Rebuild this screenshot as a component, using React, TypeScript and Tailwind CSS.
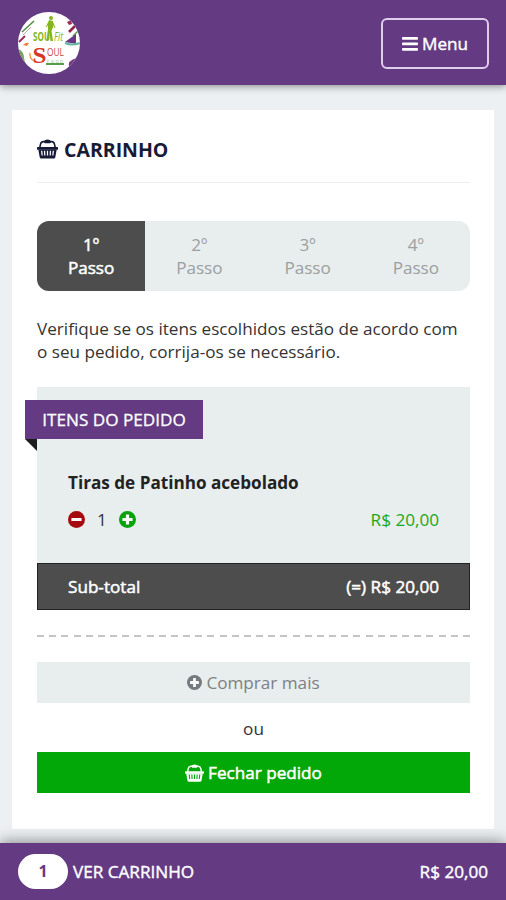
import type { ReactNode } from "react";

const steps = ["1º", "2º", "3º", "4º"];

function BasketIcon({ className }: { className?: string }) {
  return (
    <svg viewBox="0 0 21 20" className={className} fill="currentColor" aria-hidden="true">
      <path
        d="M2.8 8.5L3.6 4.9Q4.1 2.6 6.4 2.6H14.6Q16.9 2.6 17.4 4.9L18.2 8.5"
        fill="none"
        stroke="currentColor"
        strokeWidth="1.6"
      />
      <path d="M6.8 2.9Q7.6 .6 10.5 .6Q13.4 .6 14.2 2.9L13 4.2H8Z" />
      <rect y="8" width="21" height="2.8" rx="0.5" />
      <path
        fillRule="evenodd"
        d="M1.3 10.5H19.7L18.3 18.2Q18.1 19.6 16.7 19.6H4.3Q2.9 19.6 2.7 18.2ZM4 11.8L4.6 16.6H5.8L5.3 11.8ZM6.9 11.8L7.2 16.6H8.4L8.2 11.8ZM9.9 11.8V16.6H11.1V11.8ZM12.8 11.8L12.6 16.6H13.8L14.1 11.8ZM15.7 11.8L15.2 16.6H16.4L17 11.8Z"
      />
    </svg>
  );
}

function BarsIcon() {
  return (
    <svg viewBox="0 0 16 14" className="h-[14px] w-4" fill="currentColor" aria-hidden="true">
      <rect width="16" height="2.8" rx="0.8" />
      <rect y="5.5" width="16" height="2.8" rx="0.8" />
      <rect y="11" width="16" height="2.8" rx="0.8" />
    </svg>
  );
}

function RoundIcon({ minus, className }: { minus?: boolean; className?: string }) {
  return (
    <svg viewBox="0 0 17 17" className={className} aria-hidden="true">
      <circle cx="8.5" cy="8.5" r="8.5" fill="currentColor" />
      <rect x="3.4" y="6.9" width="10.2" height="3.2" rx="0.4" fill="#f7faf9" />
      {!minus && <rect x="6.9" y="3.4" width="3.2" height="10.2" rx="0.4" fill="#f7faf9" />}
    </svg>
  );
}

function Logo() {
  return (
    <svg viewBox="0 0 62 62" className="size-[62px]" aria-label="Sou Fit Soul Food">
      <defs>
        <clipPath id="logo-circle">
          <circle cx="31" cy="31" r="31" />
        </clipPath>
      </defs>
      <g clipPath="url(#logo-circle)">
        <rect width="62" height="62" fill="#fff" />
        <path d="M4 20L16 9" stroke="#4c8b3f" strokeWidth="1.4" />
        <path d="M5 23L13 15" stroke="#b9a7a0" strokeWidth="1" />
        <path d="M1 30L7 24" stroke="#9b2d5c" strokeWidth="2" />
        <path d="M5 33Q8 30 11 31L9 34Z" fill="#ef7d32" />
        <path d="M0 37Q6 39 6 46Q7 52 11 56L0 60Z" fill="#7ba35f" />
        <path d="M49 10L53 8L54 12L51 13Z" fill="#a42a4f" />
        <path d="M51 20L57 14" stroke="#97204b" strokeWidth="2.6" />
        <path d="M55 24L60 19" stroke="#5d9a45" strokeWidth="1.4" />
        <path d="M47 30L58 22L58 32Z" fill="#6b3686" />
        <path d="M47 31Q54 34 62 31" stroke="#63b9a4" strokeWidth="2.2" fill="none" />
        <path d="M51 56Q49 48 59 46L62 51Z" fill="#763783" />
        <circle cx="33" cy="6" r="2" fill="#85b51f" />
        <path d="M31 8L35 9L35.5 14L33.5 19L35 29H32.5L31.5 21L30.5 28H28.5L30 17L29.5 12Z" fill="#85b51f" />
        <path d="M31 10L28 15M35 11L37 16" stroke="#85b51f" strokeWidth="1" />
        <g fontFamily="Open Sans, sans-serif">
          <text x="15" y="29" fontSize="12" fontWeight="700" textLength="17" lengthAdjust="spacingAndGlyphs" fill="#83b71c">SOU</text>
          <text x="36" y="29" fontSize="12" fontStyle="italic" textLength="9" lengthAdjust="spacingAndGlyphs" fill="#83b71c">Fit</text>
          <text x="29" y="44" fontSize="11" textLength="17" lengthAdjust="spacingAndGlyphs" fill="#c9443d">OUL</text>
          <text x="29" y="50.5" fontSize="4" textLength="16" fill="#78a856">FOOD</text>
        </g>
        <text x="14.5" y="51" fontSize="24" fontWeight="700" textLength="14" lengthAdjust="spacingAndGlyphs" fontFamily="Liberation Serif, serif" fill="#d7372b">S</text>
        <path d="M12 41Q11 46 16 49" stroke="#ef8a35" strokeWidth="1.3" fill="none" />
        <rect x="28" y="51" width="18" height="2" fill="#579c4b" />
      </g>
    </svg>
  );
}

function ActionButton({ className, children }: { className: string; children: ReactNode }) {
  return (
    <button className={`flex w-full items-center justify-center gap-1 ${className}`}>
      {children}
    </button>
  );
}

export default function App() {
  return (
    <div className="flex h-[900px] w-[506px] flex-col overflow-hidden bg-[#ecf0f3] font-['Open_Sans',sans-serif] text-[17.14px] leading-[23px] text-[#333]">
      <header className="z-10 flex h-[85px] shrink-0 items-start justify-between bg-[#643b82] pr-[17px] pl-[18px] shadow-[0_1px_8px_rgba(0,0,0,0.45)]">
        <div className="pt-3">
          <Logo />
        </div>
        <button className="mt-[18px] flex h-[51px] w-[108px] items-center justify-center gap-1 rounded-md border-2 border-[#dfcdec] text-white [-webkit-text-stroke:0.4px]">
          <BarsIcon />
          <span>Menu</span>
        </button>
      </header>

      <main className="flex-1 px-3 pt-[25px]">
        <section className="h-[719px] bg-white pt-[27px] pr-6 pl-[25px]">
          <h1 className="flex h-[46px] items-start gap-[6px] border-b border-[#eeeff1] text-[19.5px] leading-[26px] font-bold text-[#171b36]">
            <BasketIcon className="mt-[2px] h-5 w-[21px]" />
            CARRINHO
          </h1>

          <ol className="mt-[38px] grid h-[70px] grid-cols-4 overflow-hidden rounded-xl bg-[#e8edee] text-center text-[#9b9fa0]">
            {steps.map((step, i) => (
              <li
                key={step}
                className={i === 0 ? "bg-[#4d4d4d] pt-3 text-white [-webkit-text-stroke:0.5px]" : "pt-3"}
              >
                {step}
                <br />
                Passo
              </li>
            ))}
          </ol>

          <p className="mt-[26px] whitespace-nowrap">
            Verifique se os itens escolhidos estão de acordo com
            <br />o seu pedido, corrija-os se necessário.
          </p>

          {/* Order items */}
          <div className="mt-6 h-[176px] bg-[#e8edee] pt-[13px]">
            <div className="relative -ml-3 flex h-[39px] w-[178px] items-center justify-center bg-[#643b82] text-white [-webkit-text-stroke:0.3px]">
              ITENS DO PEDIDO
              <svg viewBox="0 0 12 12" className="absolute top-full left-0 size-3" aria-hidden="true">
                <path d="M0 0H12V12Z" fill="#1d1d1d" />
              </svg>
            </div>
            <div className="px-[31px] pt-8">
              <h2 className="font-bold text-[#222]">Tiras de Patinho acebolado</h2>
              <div className="mt-[14px] flex items-center">
                <RoundIcon minus className="size-[17px] text-[#a50b0e]" />
                <span className="w-[34px] text-center">1</span>
                <RoundIcon className="size-[17px] text-[#08a20b]" />
                <span className="ml-auto text-[#18a91b]">R$ 20,00</span>
              </div>
            </div>
          </div>
          <div className="flex h-[47px] items-center justify-between border border-[#222] bg-[#4d4d4d] px-[30px] text-white [-webkit-text-stroke:0.5px]">
            <span>Sub-total</span>
            <span>(=) R$ 20,00</span>
          </div>

          <div className="mt-[25px] h-[2px] bg-[repeating-linear-gradient(90deg,#c4c4c4_0_7px,transparent_7px_12.17px)]" />

          <ActionButton className="mt-[25px] h-[41px] bg-[#e8edee] text-[#7b8184]">
            <RoundIcon className="size-[15px] text-[#747a7e]" />
            Comprar mais
          </ActionButton>
          <p className="pt-[14px] pb-3 text-center">ou</p>
          <ActionButton className="h-[41px] bg-[#02a807] text-white [-webkit-text-stroke:0.5px]">
            <BasketIcon className="h-[18px] w-[19px]" />
            Fechar pedido
          </ActionButton>
        </section>
      </main>

      <footer className="z-10 flex h-[57px] shrink-0 items-center bg-[#643b82] px-[18px] text-white shadow-[0_-1px_14px_rgba(0,0,0,0.45)]">
        <span className="flex h-[35px] w-[50px] items-center justify-center rounded-full bg-white text-[16px] font-bold text-[#643b82]">
          1
        </span>
        <span className="ml-[5px] [-webkit-text-stroke:0.4px]">VER CARRINHO</span>
        <span className="ml-auto [-webkit-text-stroke:0.4px]">R$ 20,00</span>
      </footer>
    </div>
  );
}
